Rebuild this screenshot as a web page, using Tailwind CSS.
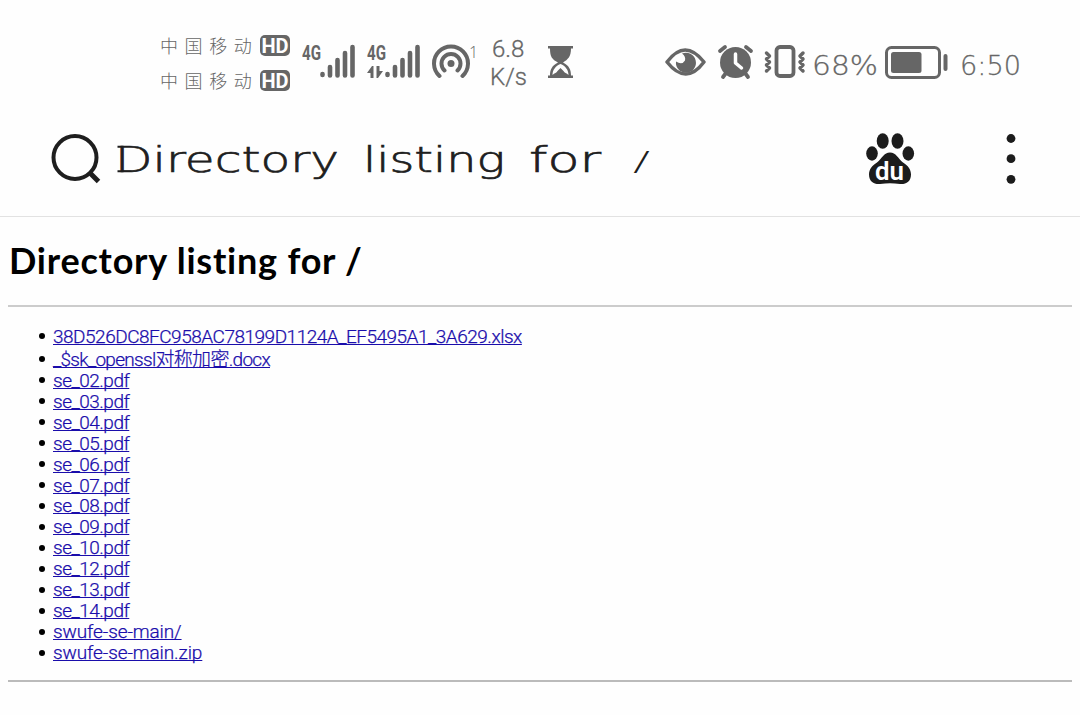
<!DOCTYPE html>
<html lang="zh"><head><meta charset="utf-8"><title>Directory listing for /</title>
<script src="https://cdn.jsdelivr.net/npm/@tailwindcss/browser@4"></script></head>
<body class="w-[1080px] h-[715px] overflow-hidden bg-[#fefefe] text-black font-['Roboto','Noto_Sans_CJK_SC',sans-serif]">
<header class="h-[217px] border-b border-[#e2e2e2]">
<div class="h-[108px] pl-40 pt-[33px] flex items-start text-[#666]">
  <div class="w-[142px] flex flex-col gap-[11px]">
    <div class="flex items-center h-6"><span class="w-[100px] text-[18px] font-light tracking-[6.6px] leading-6 whitespace-nowrap font-['Noto_Sans_CJK_SC',sans-serif]">中国移动</span><span class="w-[30px] h-[21px] rounded-[5px] bg-[#666] text-white text-[20px] font-bold leading-[22px] text-center">HD</span></div>
    <div class="flex items-center h-6"><span class="w-[100px] text-[18px] font-light tracking-[6.6px] leading-6 whitespace-nowrap font-['Noto_Sans_CJK_SC',sans-serif]">中国移动</span><span class="w-[30px] h-[21px] rounded-[5px] bg-[#666] text-white text-[20px] font-bold leading-[22px] text-center">HD</span></div>
  </div>
  <svg class="w-[130px] h-[60px] shrink-0" viewBox="302 33 130 60" fill="#666" stroke="#666"><g stroke="none" font-family="Roboto" font-size="21" font-weight="700"><text x="302" y="60" textLength="19" lengthAdjust="spacingAndGlyphs">4G</text><text x="367" y="60" textLength="19" lengthAdjust="spacingAndGlyphs">4G</text></g>
  <path stroke-width="4.6" stroke-linecap="round" d="M322.500 74v1M330 67v8.500M337.500 60v15.500M345 53v22.500M352.500 47v28.500M387.500 74v1M395 67v8.500M402.500 60v15.500M410 53v22.500M417.500 47v28.500"/><path stroke="none" d="M367 73l5-7h1.500v12h-3v-5zM376.500 66h3v5h3.500l-5 7h-1.500z"/></svg>
  <svg class="w-[58px] h-[60px] shrink-0" viewBox="432 33 58 60" fill="none" stroke="#666" stroke-width="4"><circle cx="451" cy="63.500" r="3.500" fill="#666" stroke="none"/><path stroke-linecap="round" d="M439.500 76a17 17 0 1 1 23 0M444.500 70.500a9.500 9.500 0 1 1 13 0"/><text x="469" y="58" font-family="Open Sans" font-size="16" font-weight="300" fill="#666" stroke="none">1</text></svg>
  <div class="w-[57px] pt-[2px] -ml-px pl-px text-[24px] font-light leading-7 [-webkit-text-stroke:.3px_#666]"><div class="pl-[2px]">6.8</div><div>K/s</div></div>
  <svg class="w-[30px] h-[60px] shrink-0" viewBox="546 33 30 60" fill="#666"><path d="M548 46h25v2.500h-2c0 8-3 11-8 14 6 3 8 7 8 13h2v2.500h-25v-2.500h2c0-6 2-10 8-13-6-3-8-6-8-14h-2z"/><path fill="#fff" d="M552.500 75c0-5 3-9 8-11 5 2 8 6 8 11-2-2-4-2-5-4l-3-3-3 3c-1 2-3 2-5 4z"/></svg>
  <svg class="w-[149px] h-[60px] ml-[89px] shrink-0" viewBox="665 33 149 60" fill="#666" stroke="#666" stroke-linecap="round" stroke-linejoin="round"><path fill="none" stroke-width="3.500" d="M667 62q18-24 37 0q-18 24-37 0z"/><path stroke="none" d="M682 53.500a10 10 0 1 1-6 8q6 4 9-1 1-4-3-7z"/><circle cx="735.500" cy="62.500" r="15.500" stroke="none"/><path fill="none" stroke-width="3.800" d="M720 51l5-4M746 47l5 4M726 73l-3 4M745 73l3 4"/><path fill="none" stroke="#fff" stroke-width="3.500" d="M735.500 54v9l6 5"/><rect x="776.500" y="47" width="17" height="29" rx="3.500" fill="none" stroke-width="3.800"/><path fill="none" stroke-width="3.500" d="M766.500 53l3 3-3 3 3 3-3 3 3 3-3 3M803 53l-3 3 3 3-3 3 3 3-3 3 3 3"/></svg>
  <svg class="w-[214px] h-[60px] shrink-0 -ml-1" viewBox="810 33 214 60" fill="#666"><g font-family="DejaVu Sans" font-size="27" font-weight="200" stroke="#666" stroke-width=".3"><text x="812" y="75" textLength="66" lengthAdjust="spacingAndGlyphs">68%</text><text x="960" y="75" textLength="61" lengthAdjust="spacingAndGlyphs">6:50</text></g><rect x="886.500" y="47.500" width="53" height="30" rx="5" fill="none" stroke="#666" stroke-width="3"/><rect x="891" y="52" width="30.500" height="21" rx="2.500"/><rect x="943.500" y="54" width="4" height="17" rx="2"/></svg>
</div>
<div class="h-[108px] flex items-start justify-between pl-[50px] pr-[60px]">
  <svg class="w-[610px] h-[100px]" viewBox="50 108 610 100" fill="#1e1e1e"><circle cx="75" cy="157.500" r="21.500" fill="none" stroke="#1e1e1e" stroke-width="4"/><path d="M89.500 172.500l9 9" stroke="#1e1e1e" stroke-width="5"/>
  <g font-family="DejaVu Sans" font-size="36" font-weight="200" stroke="#1e1e1e" stroke-width=".7"><text x="115" y="172" textLength="224" lengthAdjust="spacingAndGlyphs">Directory</text><text x="363" y="172" textLength="142" lengthAdjust="spacingAndGlyphs">listing</text><text x="529" y="172" textLength="72" lengthAdjust="spacingAndGlyphs">for</text></g><path fill="none" stroke="#1e1e1e" stroke-width="2" d="M117.500 146.700h6M117.500 171.300h6"/><text x="633" y="171" font-family="DejaVu Sans" font-size="27" font-weight="200" textLength="17" lengthAdjust="spacingAndGlyphs">/</text></svg>
  <svg class="w-[155px] h-[100px]" viewBox="865 108 155 100" fill="#1c1c1c"><ellipse cx="872" cy="153.500" rx="5.800" ry="7.200"/><ellipse cx="882.700" cy="141" rx="6" ry="7.800"/><ellipse cx="897.500" cy="141" rx="6" ry="7.800"/><ellipse cx="908.300" cy="153.500" rx="5.800" ry="7.200"/><path d="M890 152.500c6 0 8 6 13 10 5 3 8 7 8 12 0 7-5 10-11 9.500-7-1-13-1-20 0-6 .5-11-2.500-11-9.500 0-5 3-9 8-12 5-4 7-10 13-10z"/><text x="875" y="179.500" font-family="Roboto" font-weight="600" font-size="25" fill="#fff" textLength="29" lengthAdjust="spacingAndGlyphs">du</text><circle cx="1011" cy="138.500" r="4.400"/><circle cx="1011" cy="158.700" r="4.400"/><circle cx="1011" cy="179.300" r="4.400"/></svg>
</div>
</header>
<main class="px-[9px]">
<h1 class="pt-[20px] h-[88px] text-[36px] leading-[46px] font-bold tracking-[0.78px] whitespace-nowrap font-['Lato',sans-serif]">Directory listing for /</h1>
<hr class="border-0 h-[2px] bg-[#ccc] -mx-px">
<ul class="pt-[19px] pl-[44px] text-[19px] tracking-[-0.49px] text-[#1a0dab] list-none [&_a]:underline [&_a]:underline-offset-[1px] [&_a]:decoration-[1px] [&_a]:[text-decoration-skip-ink:none] [&>li]:h-[20.95px] [&>li]:leading-[21px] [&>li]:whitespace-nowrap [&>li]:flex [&>li]:items-center [&>li]:before:content-[''] [&>li]:before:size-[6px] [&>li]:before:rounded-full [&>li]:before:bg-black [&>li]:before:-ml-[14px] [&>li]:before:mr-[8px] font-light [-webkit-text-stroke:.25px_#1a0dab]">
<li><a>38D526DC8FC958AC78199D1124A_EF5495A1_3A629.xlsx</a></li>
<li class="mt-[2px] tracking-[-0.7px]"><a>_$sk_openssl对称加密.docx</a></li>
<li><a>se_02.pdf</a></li><li><a>se_03.pdf</a></li><li><a>se_04.pdf</a></li><li><a>se_05.pdf</a></li><li><a>se_06.pdf</a></li><li><a>se_07.pdf</a></li><li><a>se_08.pdf</a></li><li><a>se_09.pdf</a></li><li><a>se_10.pdf</a></li><li><a>se_12.pdf</a></li><li><a>se_13.pdf</a></li><li><a>se_14.pdf</a></li><li class="tracking-[-0.1px]"><a>swufe-se-main/</a></li><li class="tracking-[-0.1px]"><a>swufe-se-main.zip</a></li>
</ul>
<hr class="mt-[17px] border-0 h-[2px] bg-[#bbb] -mx-px">
</main></body></html>
